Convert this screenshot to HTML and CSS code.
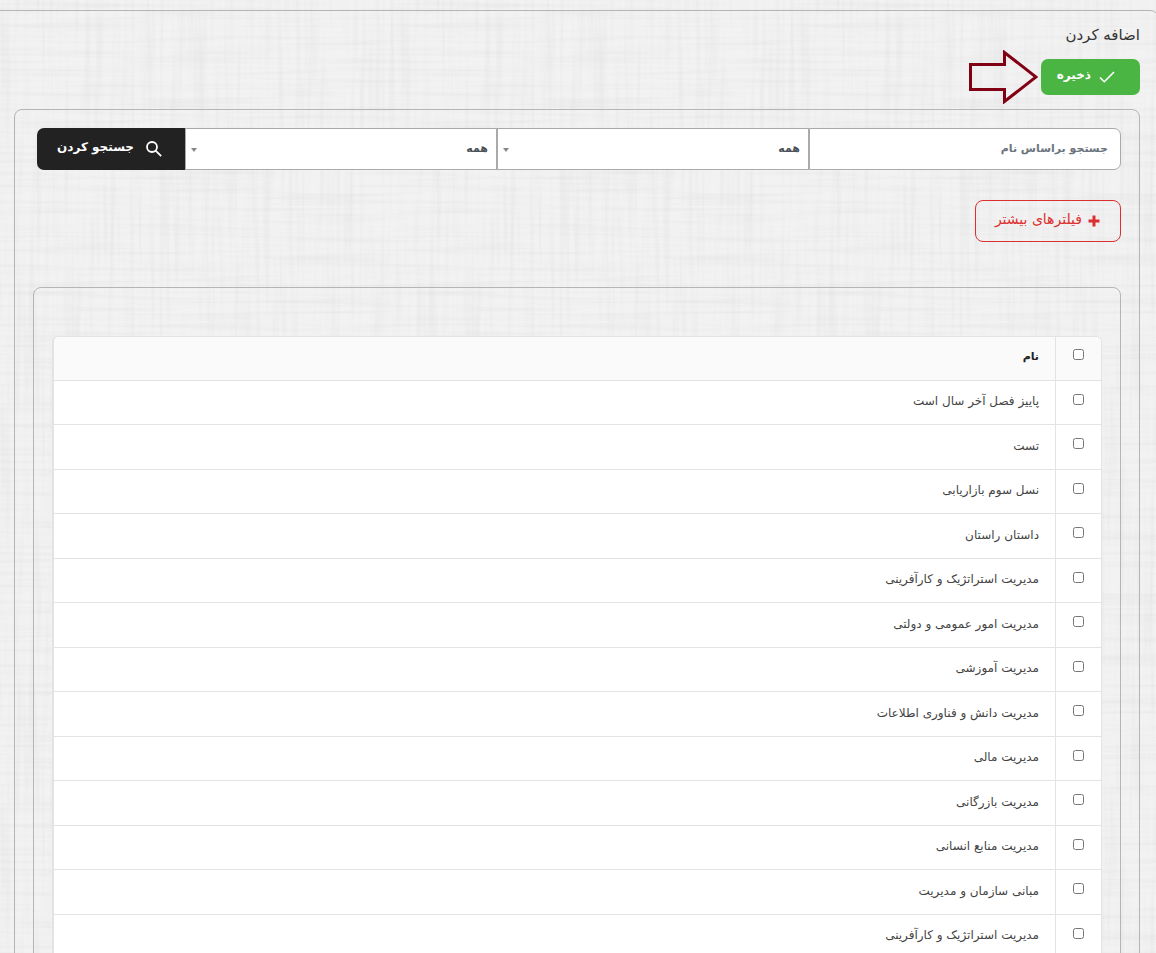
FILE: index.html
```
<!DOCTYPE html>
<html lang="fa" dir="rtl">
<head>
    <meta charset="UTF-8">
    <meta name="viewport" content="width=device-width, initial-scale=1">
    <title>اضافه کردن</title>
    <link rel="stylesheet" href="styles.css">
</head>
<body>
    <main class="page">
        <h1 class="page-title">اضافه کردن</h1>

        <div class="actions">
            <button type="button" class="btn btn-save">
                <svg width="16" height="12" viewBox="0 0 16 12" fill="none" stroke="currentColor" stroke-width="1.600"><path d="M1 6.500L5.300 10.700L15 1"/></svg>
                <span>ذخیره</span>
            </button>
            <svg class="pointer" width="70" height="54" viewBox="0 0 70 54" fill="none" stroke="#820014" stroke-width="3"><path d="M2.500 14.500H36.500V2.500L68 27L36.500 51.500V39.500H2.500Z"/></svg>
        </div>

        <section class="panel">
            <form class="search">
                <input type="text" class="field" placeholder="جستجو براساس نام" aria-label="جستجو براساس نام">
                <select class="field" aria-label="دسته">
                    <option>همه</option>
                </select>
                <select class="field" aria-label="وضعیت">
                    <option>همه</option>
                </select>
                <button type="button" class="btn btn-search">
                    <svg width="16" height="16" viewBox="0 0 16 16" fill="none" stroke="currentColor" stroke-width="1.800"><circle cx="6" cy="6" r="5"/><path d="M9.600 9.600L15.200 15.200"/></svg>
                    <span>جستجو کردن</span>
                </button>
            </form>

            <button type="button" class="btn btn-filter">
                <svg width="12" height="12" viewBox="0 0 12 12" stroke="currentColor" stroke-width="3"><path d="M6 0.500V11.500M0.500 6H11.500"/></svg>
                <span>فیلترهای بیشتر</span>
            </button>

            <div class="list">
                <table class="items">
                    <thead>
                        <tr><th class="check"><input type="checkbox" aria-label="انتخاب همه"></th><th>نام</th></tr>
                    </thead>
                    <tbody>
                        <tr><td class="check"><input type="checkbox" id="item1"></td><td><label for="item1">پاییز فصل آخر سال است</label></td></tr>
                        <tr><td class="check"><input type="checkbox" id="item2"></td><td><label for="item2">تست</label></td></tr>
                        <tr><td class="check"><input type="checkbox" id="item3"></td><td><label for="item3">نسل سوم بازاریابی</label></td></tr>
                        <tr><td class="check"><input type="checkbox" id="item4"></td><td><label for="item4">داستان راستان</label></td></tr>
                        <tr><td class="check"><input type="checkbox" id="item5"></td><td><label for="item5">مدیریت استراتژیک و کارآفرینی</label></td></tr>
                        <tr><td class="check"><input type="checkbox" id="item6"></td><td><label for="item6">مدیریت امور عمومی و دولتی</label></td></tr>
                        <tr><td class="check"><input type="checkbox" id="item7"></td><td><label for="item7">مدیریت آموزشی</label></td></tr>
                        <tr><td class="check"><input type="checkbox" id="item8"></td><td><label for="item8">مدیریت دانش و فناوری اطلاعات</label></td></tr>
                        <tr><td class="check"><input type="checkbox" id="item9"></td><td><label for="item9">مدیریت مالی</label></td></tr>
                        <tr><td class="check"><input type="checkbox" id="item10"></td><td><label for="item10">مدیریت بازرگانی</label></td></tr>
                        <tr><td class="check"><input type="checkbox" id="item11"></td><td><label for="item11">مدیریت منابع انسانی</label></td></tr>
                        <tr><td class="check"><input type="checkbox" id="item12"></td><td><label for="item12">مبانی سازمان و مدیریت</label></td></tr>
                        <tr><td class="check"><input type="checkbox" id="item13"></td><td><label for="item13">مدیریت استراتژیک و کارآفرینی</label></td></tr>
                    </tbody>
                </table>
            </div>
        </section>
    </main>
</body>
</html>
```

FILE: styles.css
```
* {
    box-sizing: border-box;
}
body {
    margin: 0;
    overflow-x: hidden;
    font-family: "DejaVu Sans", sans-serif;
    font-size: 12px;
    color: #444;
    background-color: #f2f2f2;
    /* Linen texture: long horizontal and vertical threads */
    background-image:
        url("data:image/svg+xml,%3Csvg xmlns='http://www.w3.org/2000/svg' width='400' height='400'%3E%3Cfilter id='h' x='0' y='0' width='100%25' height='100%25'%3E%3CfeTurbulence type='fractalNoise' baseFrequency='0.008 0.25' numOctaves='2' seed='3' stitchTiles='stitch'/%3E%3CfeColorMatrix values='0 0 0 0 0.6 0 0 0 0 0.6 0 0 0 0 0.62 0.45 0 0 0 -0.2'/%3E%3C/filter%3E%3Crect width='400' height='400' filter='url(%23h)'/%3E%3C/svg%3E"),
        url("data:image/svg+xml,%3Csvg xmlns='http://www.w3.org/2000/svg' width='400' height='400'%3E%3Cfilter id='v' x='0' y='0' width='100%25' height='100%25'%3E%3CfeTurbulence type='fractalNoise' baseFrequency='0.2 0.008' numOctaves='2' seed='8' stitchTiles='stitch'/%3E%3CfeColorMatrix values='0 0 0 0 0.6 0 0 0 0 0.6 0 0 0 0 0.62 0.45 0 0 0 -0.2'/%3E%3C/filter%3E%3Crect width='400' height='400' filter='url(%23v)'/%3E%3C/svg%3E");
}

/* Outer frame runs past both sides of the window */
.page {
    margin: 10px -4px 0 -12px;
    padding: 12px 19px 20px 25px;
    border: 1px solid #b5b5b5;
    border-radius: 10px;
}
.page-title {
    margin: 0 0 12px;
    font-size: 15px;
    font-weight: normal;
    line-height: 24px;
    color: #333;
}
.actions {
    position: relative;
    margin-bottom: 14px;
}
/* Arrow laid over the page, pointing at the save button */
.pointer {
    position: absolute;
    top: -9px;
    right: 102px;
}

/* Buttons */
.btn {
    display: flex;
    align-items: center;
    padding: 0;
    border: 0;
    border-radius: 7px;
    font-family: inherit;
    font-size: 12px;
    font-weight: bold;
    cursor: pointer;
}
.btn span {
    padding-bottom: 4px;
}
.btn-save {
    gap: 8px;
    width: 99px;
    height: 36px;
    padding-right: 25px;
    color: #fff;
    background-color: #4bb543;
}
.btn-search {
    gap: 12px;
    padding-right: 23px;
    border-radius: 7px 0 0 7px;
    color: #fff;
    background-color: #222;
}
.btn-filter {
    gap: 6px;
    width: 146px;
    height: 42px;
    margin: 30px 0 45px;
    padding-right: 20px;
    border: 1px solid #dc3030;
    border-radius: 8px;
    font-size: 14px;
    font-weight: normal;
    color: #dc3030;
    background: transparent;
}

.panel {
    padding: 18px;
    border: 1px solid #b5b5b5;
    border-radius: 8px;
}

/* Search row */
.search {
    display: grid;
    grid-template-columns: 1fr 1fr 1fr 148px;
    height: 42px;
    margin-left: 4px;
}
.field {
    min-width: 0;
    padding: 0 8px 2px;
    border: 1px solid #aaa;
    border-radius: 0;
    appearance: none;
    font-family: inherit;
    font-size: 11px;
    font-weight: bold;
    color: #495057;
    background-color: #fff;
}
input.field {
    padding: 0 12px 2px;
    border-radius: 0 7px 7px 0;
}
.field::placeholder {
    color: #6c757d;
    opacity: 1;
}
select.field {
    background-image: url("data:image/svg+xml,%3Csvg xmlns='http://www.w3.org/2000/svg' width='6' height='4'%3E%3Cpath d='M0 0H6L3 4Z' fill='%23888'/%3E%3C/svg%3E");
    background-repeat: no-repeat;
    background-position: left 5px top 19px;
}

/* Items table */
.list {
    padding: 48px 18px 20px;
    border: 1px solid #b5b5b5;
    border-radius: 8px;
}
.items {
    width: 100%;
    border: 1px solid #e3e3e3;
    border-left-width: 2px;
    border-bottom: 0;
    border-radius: 6px;
    border-spacing: 0;
    overflow: hidden;
    background-color: #fff;
}
.items th,
.items td {
    height: 44px;
    padding: 0 16px 3px;
    border-bottom: 1px solid #e3e3e3;
    text-align: right;
    line-height: 20px;
}
.items tbody tr:nth-child(even) td {
    height: 45px;
}
.items th {
    font-size: 11px;
    color: #222;
    background-color: #fafafa;
}
.items .check {
    width: 46px;
    padding: 0 0 8px;
    border-left: 1px solid #e3e3e3;
    text-align: center;
}
.items input {
    width: 11px;
    height: 11px;
    margin: 0;
    vertical-align: middle;
}
```
